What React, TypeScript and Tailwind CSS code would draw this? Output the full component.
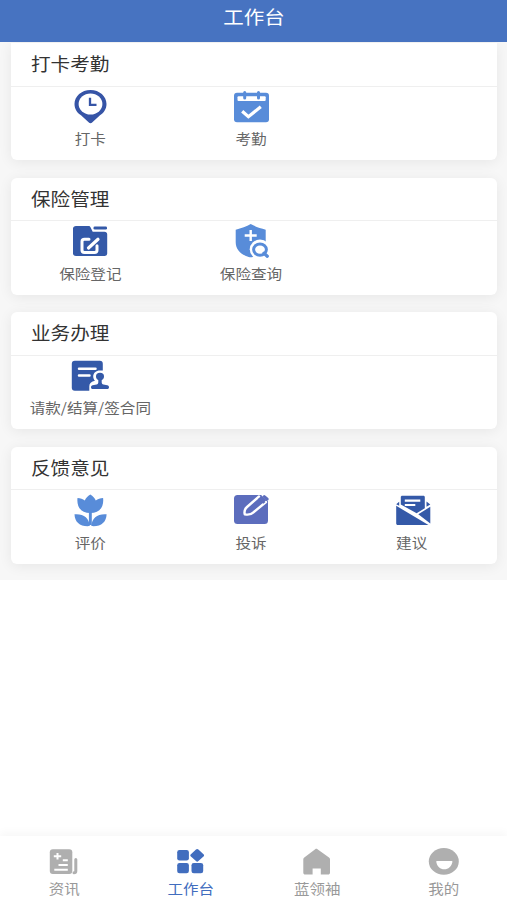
import React from "react";

const ClockPin = () => (
  <svg viewBox="0 0 40 38" className="w-10 h-[38px]">
    <path d="M20.500 2C11.500 2 4.500 8.300 4.500 16c0 5 2.600 8.800 6.500 11.300l7.600 7c1.200 1.200 2.600 1.200 3.800 0l7.600-7c3.900-2.500 6.500-6.300 6.500-11.300C36.500 8.300 29.500 2 20.500 2z" fill="#3654a6" />
    <ellipse cx="20.500" cy="16" rx="11.900" ry="10.600" fill="#fff" />
    <path d="M20 9.800v7h6.500" fill="none" stroke="#3654a6" strokeWidth="2.300" />
  </svg>
);

const Calendar = () => (
  <svg viewBox="0 0 40 38" className="w-10 h-[38px]">
    <rect x="3" y="4.700" width="35" height="29.500" rx="3" fill="#588cd9" />
    <rect x="6.500" y="8.200" width="28.200" height="4.800" rx="1" fill="#fff" />
    <path d="M13.700 4.500v5.500M27.500 4.500v5.500" stroke="#588cd9" strokeWidth="3" strokeLinecap="round" />
    <path d="M11.200 23.200l6.200 5.500L29.800 18.700" fill="none" stroke="#fff" strokeWidth="3.200" />
  </svg>
);

const FolderEdit = () => (
  <svg viewBox="0 0 40 38" className="w-10 h-[38px]">
    <path d="M6 4h12.500c1 0 1.600.4 2 1.200l2.200 4.600H34.500c1.600 0 2.700 1 2.700 2.400v19.300c0 1.500-1.100 2.500-2.700 2.500H6c-1.700 0-3-1-3-2.500v-25C3 5 4.300 4 6 4z" fill="#3459a8" />
    <rect x="23.500" y="4.500" width="13.500" height="3" rx="1.300" fill="#3459a8" />
    <path d="M19 17.200h-4.500c-1.500 0-2.500.9-2.500 2.200v8.900c0 1.400 1 2.200 2.500 2.200h10c1.500 0 2.500-.8 2.500-2.200v-4.500" fill="none" stroke="#fff" strokeWidth="3" strokeLinecap="round" />
    <path d="M18.500 26l9.500-8.700" stroke="#fff" strokeWidth="3.200" strokeLinecap="round" />
  </svg>
);

const ShieldSearch = () => (
  <svg viewBox="0 0 40 38" className="w-10 h-[38px]">
    <path d="M19.700 2c4 2.400 9.500 4.200 15 5.700v12.500c0 7-5 12.300-13 14.700-1.300.4-2.700.4-4 0-8-2.400-13-7.700-13-14.700V7.700c5.500-1.500 11-3.300 15-5.700z" fill="#588cd9" />
    <path d="M19.700 8v11M13.700 13.500h12" stroke="#fff" strokeWidth="2.400" />
    <ellipse cx="29" cy="27.300" rx="10.300" ry="9.700" fill="#fff" />
    <ellipse cx="29" cy="27.600" rx="6.400" ry="5.700" fill="none" stroke="#588cd9" strokeWidth="3" />
    <path d="M33 31.200l3.300 3" stroke="#588cd9" strokeWidth="3.200" strokeLinecap="round" />
  </svg>
);

const DocStamp = () => (
  <svg viewBox="0 0 40 38" className="w-10 h-[38px]">
    <rect x="1.800" y="3.700" width="31" height="30" rx="3" fill="#3459a8" />
    <path d="M9 11.800h16.500M9 18.600h10.500" stroke="#fff" strokeWidth="2.500" strokeLinecap="round" />
    <path d="M30 13.500c-4 0-6.800 2.600-6.800 6 0 1.700.7 3.200 1.800 4.300-3.700.8-5.700 2.600-5.700 5.400V36H40V13.500z" fill="#fff" />
    <ellipse cx="30" cy="19.500" rx="4" ry="3.700" fill="#3459a8" />
    <path d="M28.300 21h3.400v4.200c0 1.300.6 2 1.700 2.200l3.900.8c1.100.3 1.700 1 1.700 2s-.7 1.900-1.700 1.900H22.700c-1 0-1.700-.9-1.700-1.900s.6-1.700 1.700-2l3.900-.8c1.100-.2 1.700-.9 1.700-2.200z" fill="#3459a8" />
  </svg>
);

const Flower = () => (
  <svg viewBox="0 0 40 38" className="w-10 h-[38px]">
    <g fill="#588cd9">
      <path d="M20.300 3.500c2.600 1.600 4.500 3.600 5.500 6 2-1.500 4.400-2.300 7.300-2.400 1 8.600-3.500 15-12.800 15S6.500 15.700 7.500 7.100c2.900.1 5.300.9 7.300 2.400 1-2.400 2.900-4.400 5.500-6z" />
      <path d="M18.900 20h2.900v14h-2.900z" />
      <path d="M4.500 23.300c8.800-.8 14.700 3.500 15.300 11.800-9.400.8-15-3.400-15.300-11.800zM36.600 23.300c-8.800-.8-14.700 3.500-15.300 11.800 9.400.8 15-3.400 15.300-11.800z" />
    </g>
  </svg>
);

const PenSquare = () => (
  <svg viewBox="0 0 40 38" className="w-10 h-[38px]">
    <rect x="3" y="4" width="34" height="29" rx="3.500" fill="#5c6dbd" />
    <path d="M29.500 3.500l9 8V3.500z" fill="#fff" />
    <path d="M28 5.500L16 16c-2.600 2.400-2.800 5.200-2.200 7.300 2.700.7 6 .4 8.700-2L35 11" fill="none" stroke="#fff" strokeWidth="2.400" strokeLinecap="round" strokeLinejoin="round" />
    <path d="M29.200 6.300l5.300 4.600-2.200 1.800-5.300-4.600z" fill="#5c6dbd" />
    <path d="M33.300 5.500l3 2.600" stroke="#5c6dbd" strokeWidth="2.800" strokeLinecap="round" />
  </svg>
);

const Envelope = () => (
  <svg viewBox="0 0 40 38" className="w-10 h-[38px]">
    <g fill="#3459a8">
      <path d="M10.300 4.700h21c.9 0 1.500.6 1.500 1.400v11.200l-8.200 4.900L8.800 13.500V6.100c0-.8.6-1.400 1.500-1.400z" />
      <path d="M4.200 14.800L36.500 34H5.800c-1 0-1.600-.6-1.600-1.500z" />
      <path d="M38.300 15.800v16.700L26.300 23.200zM4.200 13.300l3-2.500v4zM38.300 13.600l-3.800-3v5.200z" />
    </g>
    <path d="M12.800 9.700h15.500M12.800 14h10.500" stroke="#fff" strokeWidth="2.200" />
  </svg>
);

const NewsIcon = () => (
  <svg viewBox="0 0 32 28" className="w-8 h-7">
    <rect x="1.800" y="1.300" width="22.500" height="24.600" rx="3" fill="#afafaf" />
    <path d="M27.800 11.500v11.800c0 1-.5 1.500-1.800 1.500" fill="none" stroke="#afafaf" strokeWidth="3" strokeLinecap="round" />
    <path d="M9.500 5v6.600M5.800 8.300h7.400M14.800 12.300h5M10.500 17h9.300M6.300 21.700h13.500" stroke="#fff" strokeWidth="2" />
  </svg>
);

const WorkIcon = () => (
  <svg viewBox="0 0 32 28" className="w-8 h-7" fill="#416dbe">
    <rect x="2.200" y="2" width="11.700" height="10.500" rx="2.300" />
    <rect x="2.200" y="14.900" width="11.700" height="10.300" rx="2.300" />
    <rect x="16.500" y="14.900" width="11.700" height="10.300" rx="2.300" />
    <path d="M21 1.500c.8-.8 1.600-.8 2.400 0l5.100 4.700c.8.8.8 1.500 0 2.300l-5.100 4.600c-.8.8-1.600.8-2.400 0l-5.100-4.600c-.8-.8-.8-1.500 0-2.300z" />
  </svg>
);

const HomeIcon = () => (
  <svg viewBox="0 0 32 28" className="w-8 h-7" fill="#afafaf">
    <path d="M14.200 1.300c.8-.6 1.500-.6 2.300 0L28 9.500c.6.4 1 1 1 1.700v13.600c0 1.100-.8 1.800-1.900 1.800h-7.300v-6.200h-8.200v6.200H4.200c-1.100 0-1.900-.7-1.900-1.800V11.200c0-.7.4-1.300 1-1.700z" />
  </svg>
);

const MineIcon = () => (
  <svg viewBox="0 0 32 28" className="w-8 h-7">
    <ellipse cx="15.800" cy="13.400" rx="15" ry="13.300" fill="#afafaf" />
    <path d="M9.200 13h14.300c.8 0 1 .4.9 1-.8 4.500-4 7.300-8.100 7.300S9 18.500 8.300 14c-.1-.6.1-1 .9-1z" fill="#fff" />
  </svg>
);

const sections = [
  {
    title: "打卡考勤",
    items: [
      { name: "打卡", icon: <ClockPin /> },
      { name: "考勤", icon: <Calendar /> },
    ],
  },
  {
    title: "保险管理",
    items: [
      { name: "保险登记", icon: <FolderEdit /> },
      { name: "保险查询", icon: <ShieldSearch /> },
    ],
  },
  {
    title: "业务办理",
    items: [{ name: "请款/结算/签合同", icon: <DocStamp /> }],
  },
  {
    title: "反馈意见",
    items: [
      { name: "评价", icon: <Flower /> },
      { name: "投诉", icon: <PenSquare /> },
      { name: "建议", icon: <Envelope /> },
    ],
  },
];

const tabs = [
  { name: "资讯", icon: <NewsIcon />, active: false },
  { name: "工作台", icon: <WorkIcon />, active: true },
  { name: "蓝领袖", icon: <HomeIcon />, active: false },
  { name: "我的", icon: <MineIcon />, active: false },
];

export default function App() {
  return (
    <div className="flex h-[900px] w-full flex-col overflow-hidden bg-white font-['Noto_Sans_CJK_SC',sans-serif]">
      <header className="flex h-[42px] shrink-0 justify-center bg-[#4773c1] pt-[3px]">
        <h1 className="scale-y-90 pl-[1px] text-[20.5px] leading-6 text-white">工作台</h1>
      </header>
      <main className="flex h-[538px] shrink-0 flex-col gap-[17.6px] overflow-hidden bg-[#f7f7f7] pl-[11px] pr-[10px]">
        {sections.map((section) => (
          <section
            key={section.title}
            className="h-[117px] shrink-0 rounded-md bg-white shadow-[0_2px_14px_rgba(0,0,0,0.07)] first:mt-[1px] first:rounded-t-none"
          >
            <div className="flex h-[43.5px] items-center border-b border-[#efefef] pb-[0.5px] pl-[20px]">
              <h2 className="scale-y-90 text-[19.6px] leading-6 text-[#333]">{section.title}</h2>
            </div>
            <div className="mr-[5px] -ml-[1px] grid grid-cols-3 pt-[1px]">
              {section.items.map((item) => (
                <div key={item.name} className="flex flex-col items-center">
                  {item.icon}
                  <p className="mt-[2.5px] scale-y-90 whitespace-nowrap text-[15.6px] leading-5 text-[#666]">
                    {item.name}
                  </p>
                </div>
              ))}
            </div>
          </section>
        ))}
      </main>
      <nav className="mt-auto grid h-[64px] shrink-0 grid-cols-4 bg-white pl-[1px] pt-[12px] shadow-[0_-4px_8px_rgba(0,0,0,0.03)]">
        {tabs.map((tab) => (
          <div key={tab.name} className="flex flex-col items-center">
            {tab.icon}
            <p
              className={`mt-[2px] scale-y-90 text-[15.5px] leading-5 ${tab.active ? "text-[#416dbe]" : "text-[#999]"}`}
            >
              {tab.name}
            </p>
          </div>
        ))}
      </nav>
    </div>
  );
}
